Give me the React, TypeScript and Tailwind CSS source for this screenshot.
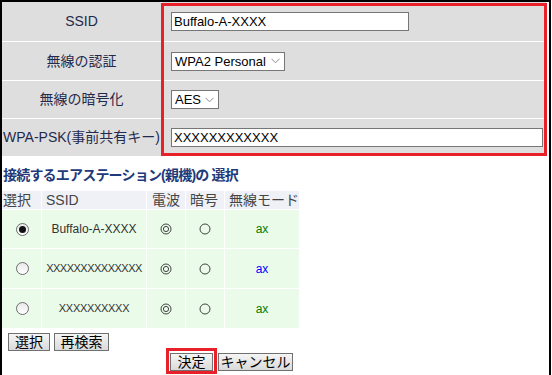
import React from 'react';

const labelCls = 'bg-[#dedede] flex items-center justify-center text-[14px] text-[#1f2a4c]';
const valueCls = 'bg-[#dedede] flex items-center pl-[9px]';

const Chevron: React.FC = () => (
  <svg width="9" height="6" viewBox="0 0 9 6" className="ml-auto mr-[4px]">
    <path d="M0.5 0.8 L4.5 4.8 L8.5 0.8" fill="none" stroke="#8a8a8a" strokeWidth="1" />
  </svg>
);

const Radio: React.FC<{ checked?: boolean }> = ({ checked }) => (
  <span className="w-[13px] h-[13px] rounded-full border border-[#6b6b6b] bg-gradient-to-b from-[#e9e9e9] to-white flex items-center justify-center">
    {checked && <span className="w-[7px] h-[7px] rounded-full bg-[#111]"></span>}
  </span>
);

// ◎ / ○ marks
const Mark: React.FC<{ double?: boolean }> = ({ double }) => (
  <svg width="12" height="12" viewBox="0 0 12 12">
    <circle cx="6" cy="6" r="5" fill="none" stroke="#444" strokeWidth="1" />
    {double && <circle cx="6" cy="6" r="2.6" fill="none" stroke="#444" strokeWidth="1" />}
  </svg>
);

const rows = [
  { ssid: 'Buffalo-A-XXXX', ssidCls: 'text-[12px]', mode: 'text-[#008000]', h: 'h-[38px]', checked: true },
  { ssid: 'XXXXXXXXXXXXXX', ssidCls: 'text-[11px] tracking-[-0.5px]', mode: 'text-[#0000ff]', h: 'h-[39px]', checked: false },
  { ssid: 'XXXXXXXXXX', ssidCls: 'text-[11px] tracking-[-0.3px]', mode: 'text-[#008000]', h: 'h-[39px]', checked: false },
];

const btnCls =
  'h-[18px] border border-[#707070] bg-gradient-to-b from-[#f5f5f5] to-[#dadada] text-[14px] leading-[16px] text-black flex items-center justify-center';

export default function App() {
  return (
    <div className="w-[552px] h-[375px] bg-white overflow-hidden font-['Liberation_Sans','Noto_Sans_CJK_JP',sans-serif]">
      <div className="w-[551px] h-[377px] border-l-2 border-t-2 border-r-2 border-black">
        {/* settings table */}
        <div className="relative">
          <div className="grid grid-cols-[159px_384px] grid-rows-[39px_38px_37px_37px] gap-px bg-white w-[544px]">
            <div className={labelCls}>SSID</div>
            <div className={valueCls}>
              <div className="w-[238px] h-[19px] border border-[#767676] bg-white text-[13px] leading-[17px] pl-[2px] text-black">
                Buffalo-A-XXXX
              </div>
            </div>
            <div className={labelCls}>無線の認証</div>
            <div className={valueCls}>
              <div className="w-[114px] h-[19px] border border-[#767676] bg-white text-[13px] leading-[17px] pl-[3px] text-black flex items-center">
                WPA2 Personal
                <Chevron />
              </div>
            </div>
            <div className={labelCls}>無線の暗号化</div>
            <div className={valueCls}>
              <div className="w-[48px] h-[19px] border border-[#767676] bg-white text-[13px] leading-[17px] pl-[3px] text-black flex items-center">
                AES
                <Chevron />
              </div>
            </div>
            <div className={labelCls}>WPA-PSK(事前共有キー)</div>
            <div className={valueCls}>
              <div className="w-[372px] h-[19px] border border-[#767676] bg-white text-[13px] leading-[17px] pl-[2px] text-black">
                XXXXXXXXXXXX
              </div>
            </div>
          </div>
          <div className="absolute left-[159px] top-[1px] w-[386px] h-[153px] border-[3px] border-[#e8202a] pointer-events-none"></div>
        </div>

        {/* heading */}
        <div className="h-[35px] pt-[9px] pl-[1px] text-[14px] leading-[20px] font-bold tracking-[-0.8px] text-[#1d3a7a]">
          接続するエアステーション(親機)の 選択
        </div>

        {/* station table */}
        <div className="grid grid-cols-[39px_104px_38px_38px_74px] gap-px bg-white w-[297px]">
          <div className="h-[18px] bg-[#eff1f7] text-[14px] leading-[18px] text-[#444] pl-[1px]">選択</div>
          <div className="h-[18px] bg-[#eff1f7] text-[14px] leading-[18px] text-[#444] pl-[4px]">SSID</div>
          <div className="h-[18px] bg-[#eff1f7] text-[14px] leading-[18px] text-[#444] pl-[5px]">電波</div>
          <div className="h-[18px] bg-[#eff1f7] text-[14px] leading-[18px] text-[#444] pl-[4px]">暗号</div>
          <div className="h-[18px] bg-[#eff1f7] text-[14px] leading-[18px] text-[#444] pl-[4px]">無線モード</div>
          {rows.map((r, i) => (
            <React.Fragment key={i}>
              <div className={`${r.h} bg-[#eafbea] flex items-center justify-center pl-[2px]`}>
                <Radio checked={r.checked} />
              </div>
              <div className={`${r.h} bg-[#eafbea] flex items-center justify-center text-[#333] ${r.ssidCls}`}>
                {r.ssid}
              </div>
              <div className={`${r.h} bg-[#eafbea] flex items-center justify-center`}>
                <Mark double />
              </div>
              <div className={`${r.h} bg-[#eafbea] flex items-center justify-center`}>
                <Mark />
              </div>
              <div className={`${r.h} bg-[#eafbea] flex items-center justify-center text-[12px] ${r.mode}`}>ax</div>
            </React.Fragment>
          ))}
        </div>

        {/* buttons */}
        <div className="flex gap-[4px] pl-[6px] mt-[5px]">
          <div className={`${btnCls} w-[42px]`}>選択</div>
          <div className={`${btnCls} w-[55px]`}>再検索</div>
        </div>
        <div className="flex gap-[5px] pl-[168px] mt-[2px]">
          <div className="relative">
            <div className={`${btnCls} w-[43px]`}>決定</div>
            <div className="absolute -left-[4px] -top-[5px] w-[51px] h-[26px] border-[3px] border-[#e8202a] pointer-events-none"></div>
          </div>
          <div className={`${btnCls} w-[75px]`}>キャンセル</div>
        </div>
      </div>
    </div>
  );
}
